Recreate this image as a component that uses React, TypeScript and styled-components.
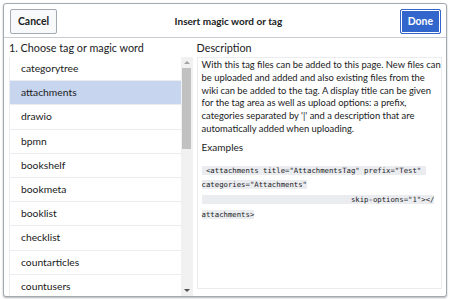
import React from "react";
import styled, { createGlobalStyle } from "styled-components";

const Global = createGlobalStyle`
  html, body { margin: 0; padding: 0; background: #fff; }
  body { font-family: Lato, "Open Sans", sans-serif; color: #202122; }
  * { box-sizing: border-box; }
`;

const Page = styled.div`
  padding: 3px 3px 0 3px;
  width: 450px;
  height: 299px;
  overflow: hidden;
`;

const Dialog = styled.div`
  width: 444px;
  height: 294px;
  border: 1px solid #a2a9b1;
  border-radius: 3px;
  box-shadow: 0 1px 2px rgba(0, 0, 0, 0.3);
  background: #fff;
  display: flex;
  flex-direction: column;
  overflow: hidden;
`;

const Header = styled.div`
  height: 34px;
  flex: none;
  border-bottom: 1px solid #c8ccd1;
  display: flex;
  align-items: center;
  justify-content: space-between;
  padding: 0 5px 0 6px;
`;

const Title = styled.div`
  font-weight: 700;
  font-size: 10px;
  color: #202122;
`;

const Button = styled.button<{ $primary?: boolean }>`
  height: 25px;
  margin-top: 1px;
  padding: 0 7px;
  font-family: Lato, sans-serif;
  font-weight: 700;
  font-size: 10.4px;
  border-radius: 2px;
  border: 1px solid ${(p) => (p.$primary ? "#36c" : "#a2a9b1")};
  background: ${(p) => (p.$primary ? "#36c" : "#f8f9fa")};
  color: ${(p) => (p.$primary ? "#fff" : "#202122")};
  box-shadow: ${(p) => (p.$primary ? "inset 0 0 0 1px #fff" : "none")};
`;

const Body = styled.div`
  flex: 1;
  display: flex;
  gap: 4px;
  padding: 0 4px 0 5px;
  min-height: 0;
`;

const Column = styled.div<{ $w: number }>`
  width: ${(p) => p.$w}px;
  display: flex;
  flex-direction: column;
  min-height: 0;
`;

const Heading = styled.div`
  font-size: 10.8px;
  line-height: 19px;
  height: 19px;
  flex: none;
  color: #202122;
`;

const ListWrap = styled.div`
  flex: 1;
  display: flex;
  min-height: 0;
  overflow: hidden;
`;

const List = styled.div`
  flex: 1;
  border-left: 1px solid #eaecf0;
  display: flex;
  flex-direction: column;
  overflow: hidden;
`;

const Item = styled.div<{ $selected?: boolean }>`
  flex: none;
  height: 24.2px;
  line-height: 23px;
  padding-left: 11px;
  font-size: 10.3px;
  background: ${(p) => (p.$selected ? "#c8d5ef" : "#fff")};
  border-bottom: 1px solid #eaecf0;
  color: #202122;
`;

const Scrollbar = styled.div`
  width: 12px;
  background: #f1f1f1;
  display: flex;
  flex-direction: column;
  align-items: center;
`;

const Arrow = styled.div<{ $down?: boolean }>`
  height: 11px;
  flex: none;
  display: flex;
  align-items: center;
  justify-content: center;
  &::after {
    content: "";
    border-left: 3px solid transparent;
    border-right: 3px solid transparent;
    ${(p) =>
      p.$down
        ? "border-top: 3px solid #505050;"
        : "border-bottom: 3px solid #a3a3a3;"}
  }
`;

const Thumb = styled.div`
  width: 9px;
  height: 81px;
  background: #c1c1c1;
  flex: none;
`;

const Spacer = styled.div`
  flex: 1;
`;

const DescBox = styled.div`
  flex: 1;
  margin-bottom: 7px;
  border: 1px solid #eaecf0;
  padding: 0 0 0 4px;
  font-size: 9.4px;
  line-height: 12.8px;
  color: #202122;
`;

const Para = styled.p`
  margin: 1px 0 0;
`;

const SubHeading = styled.div`
  font-size: 10px;
  line-height: 13px;
  margin: 5px 0 10px;
`;

const Code = styled.code`
  font-family: "DejaVu Sans Mono", monospace;
  font-size: 7.3px;
  line-height: 14.7px;
  background: #eaecf0;
  white-space: pre;
  color: #202122;
`;

const items = [
  "categorytree",
  "attachments",
  "drawio",
  "bpmn",
  "bookshelf",
  "bookmeta",
  "booklist",
  "checklist",
  "countarticles",
  "countusers",
];

export default function App() {
  return (
    <>
      <Global />
      <Page>
        <Dialog>
          <Header>
            <Button>Cancel</Button>
            <Title>Insert magic word or tag</Title>
            <Button $primary>Done</Button>
          </Header>
          <Body>
            <Column $w={184}>
              <Heading>1. Choose tag or magic word</Heading>
              <ListWrap>
                <List>
                  {items.map((it) => (
                    <Item key={it} $selected={it === "attachments"}>
                      {it}
                    </Item>
                  ))}
                </List>
                <Scrollbar>
                  <Arrow />
                  <Thumb />
                  <Spacer />
                  <Arrow $down />
                </Scrollbar>
              </ListWrap>
            </Column>
            <Column $w={246}>
              <Heading>Description</Heading>
              <DescBox>
                <Para>
                  With this tag files can be added to this page. New files can be uploaded and added and also
                  existing files from the wiki can be added to the tag. A display title can be given for the tag
                  area as well as upload options: a prefix, categories separated by '|' and a description that
                  are automatically added when uploading.
                </Para>
                <SubHeading>Examples</SubHeading>
                <Code>
                  {' <attachments title="AttachmentsTag" prefix="Test" '}
                  <br />
                  {'categories="Attachments"'}
                  <br />
                  {'                                  skip-options="1"></'}
                  <br />
                  {"attachments>"}
                </Code>
              </DescBox>
            </Column>
          </Body>
        </Dialog>
      </Page>
    </>
  );
}
